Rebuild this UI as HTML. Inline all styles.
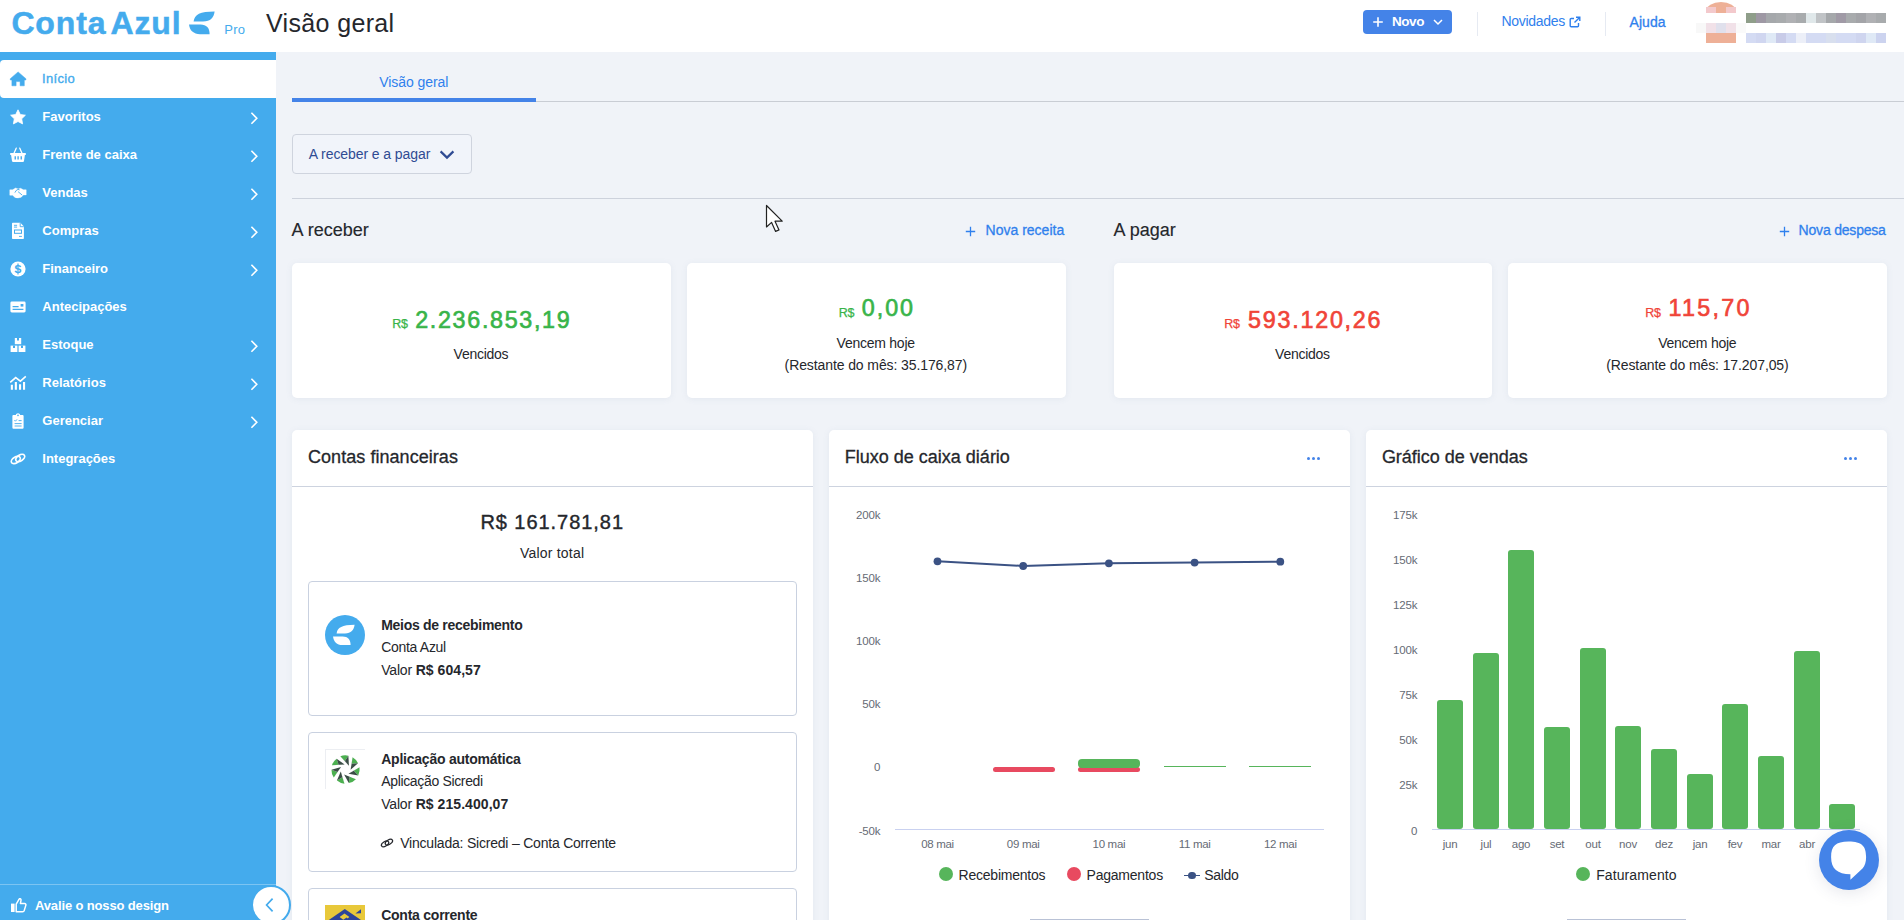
<!DOCTYPE html>
<html><head><meta charset="utf-8"><title>Visão geral</title>
<style>
html,body{margin:0;padding:0;overflow:hidden}
html{width:1904px;height:920px}
body{width:1904px;height:920px;overflow:hidden;position:relative;background:#f0f3f8;font-family:"Liberation Sans",sans-serif}
#app{position:absolute;left:0;top:0;width:1904px;height:920px;overflow:hidden;background:#f0f3f8}
.t{position:absolute;white-space:pre;line-height:1;font-family:"Liberation Sans",sans-serif}
.r{position:absolute;display:block}
b{font-weight:700;letter-spacing:0.06px}
</style></head><body>
<div id="app">
<div class="r" style="left:0px;top:0px;width:1904px;height:52px;background:#fff;"></div>
<div class="r" style="left:0px;top:52px;width:276px;height:868px;background:#44abed;"></div>
<span class="t" style="left:11.40px;top:6.71px;font-size:32px;font-weight:700;color:#44abed;letter-spacing:0.85px;-webkit-text-stroke:0.5px #44abed">Conta</span>
<span class="t" style="left:110.60px;top:6.71px;font-size:32px;font-weight:700;color:#44abed;letter-spacing:0.8px;-webkit-text-stroke:0.5px #44abed">Azul</span>
<svg class="r" style="left:186px;top:8px" width="32" height="30" viewBox="186 8 32 30"><path d="M193.6 21.6 C194.5 14.5 200 11.6 214.6 11.6 C214 17.5 210.5 21.6 203 21.6 Z" fill="#44abed"/><path d="M189 24.6 L200.5 24.6 C206.5 24.6 209.6 28 209.6 34.2 L200 34.2 C193.5 34.2 189.6 30.5 189 24.6 Z" fill="#44abed"/></svg>
<span class="t" style="left:224.30px;top:22.70px;font-size:13px;font-weight:400;color:#44abed;letter-spacing:0.2px;">Pro</span>
<span class="t" style="left:266.00px;top:11.34px;font-size:25px;font-weight:400;color:#25272c;letter-spacing:0.35px;">Visão geral</span>
<div class="r" style="left:1363px;top:10px;width:89px;height:24px;background:#4483e8;border-radius:4px"></div>
<svg class="r" style="left:1372px;top:16px" width="12" height="12" viewBox="0 0 12 12"><path d="M6 1.2V10.8M1.2 6H10.8" stroke="#fff" stroke-width="1.6" fill="none"/></svg>
<span class="t" style="left:1392.00px;top:15.17px;font-size:13.5px;font-weight:700;color:#fff;letter-spacing:-0.45px;">Novo</span>
<svg class="r" style="left:1433px;top:18px" width="10" height="8" viewBox="0 0 10 8"><path d="M1 2L5 6L9 2" stroke="#fff" stroke-width="1.5" fill="none"/></svg>
<div class="r" style="left:1477px;top:12px;width:1px;height:24px;background:#e6eaf2;"></div>
<span class="t" style="left:1501.50px;top:14.15px;font-size:14px;font-weight:400;color:#2f80ed;letter-spacing:-0.3px;">Novidades</span>
<svg class="r" style="left:1569px;top:16px" width="12" height="12" viewBox="0 0 12 12"><path d="M5 2.5H2.2C1.6 2.5 1.2 2.9 1.2 3.5V9.8C1.2 10.4 1.6 10.8 2.2 10.8H8.5C9.1 10.8 9.5 10.4 9.5 9.8V7" stroke="#2f80ed" stroke-width="1.4" fill="none"/><path d="M7 1.2H10.8V5M10.8 1.2L5.5 6.5" stroke="#2f80ed" stroke-width="1.4" fill="none"/></svg>
<div class="r" style="left:1605px;top:12px;width:1px;height:24px;background:#e6eaf2;"></div>
<span class="t" style="left:1629.50px;top:14.65px;font-size:14px;font-weight:400;color:#2f80ed;letter-spacing:0.05px;-webkit-text-stroke:0.3px #2f80ed">Ajuda</span>
<div class="r" style="left:1706px;top:2px;width:30px;height:11px;overflow:hidden"><div style="position:absolute;left:0;top:0;width:30px;height:22px;border-radius:15px 15px 0 0/9px 9px 0 0;background:#eeb097"></div><div style="position:absolute;left:0;top:5px;width:10px;height:6px;background:#f3c9cc"></div><div style="position:absolute;left:20px;top:5px;width:10px;height:6px;background:#f3c9cc"></div></div>
<div class="r" style="left:1696px;top:23px;width:10px;height:10px;background:#f8f8f8;"></div>
<div class="r" style="left:1706px;top:23px;width:10px;height:10px;background:#f1e1e8;"></div>
<div class="r" style="left:1716px;top:23px;width:10px;height:10px;background:#e0e0ec;"></div>
<div class="r" style="left:1726px;top:23px;width:10px;height:10px;background:#f1e1e8;"></div>
<div class="r" style="left:1736px;top:23px;width:10px;height:10px;background:#fafafa;"></div>
<div class="r" style="left:1706px;top:33px;width:30px;height:10px;background:#eeb097;"></div>
<div class="r" style="left:1746px;top:13px;width:10px;height:10px;background:#8f9e8a;"></div>
<div class="r" style="left:1756px;top:13px;width:10px;height:10px;background:#9e98a4;"></div>
<div class="r" style="left:1766px;top:13px;width:10px;height:10px;background:#a5a8ab;"></div>
<div class="r" style="left:1776px;top:13px;width:10px;height:10px;background:#a8abad;"></div>
<div class="r" style="left:1786px;top:13px;width:10px;height:10px;background:#b0b1b4;"></div>
<div class="r" style="left:1796px;top:13px;width:10px;height:10px;background:#a8abad;"></div>
<div class="r" style="left:1806px;top:13px;width:10px;height:10px;background:#e0e8ea;"></div>
<div class="r" style="left:1816px;top:13px;width:10px;height:10px;background:#c0c3c6;"></div>
<div class="r" style="left:1826px;top:13px;width:10px;height:10px;background:#a5a8ab;"></div>
<div class="r" style="left:1836px;top:13px;width:10px;height:10px;background:#a09aa6;"></div>
<div class="r" style="left:1846px;top:13px;width:10px;height:10px;background:#a8abad;"></div>
<div class="r" style="left:1856px;top:13px;width:10px;height:10px;background:#a3a4a8;"></div>
<div class="r" style="left:1866px;top:13px;width:10px;height:10px;background:#b0b1b4;"></div>
<div class="r" style="left:1876px;top:13px;width:10px;height:10px;background:#a8abad;"></div>
<div class="r" style="left:1746px;top:33px;width:10px;height:10px;background:#d4dbf3;"></div>
<div class="r" style="left:1756px;top:33px;width:10px;height:10px;background:#d0d6f0;"></div>
<div class="r" style="left:1766px;top:33px;width:10px;height:10px;background:#dfe9f6;"></div>
<div class="r" style="left:1776px;top:33px;width:10px;height:10px;background:#c8cbe8;"></div>
<div class="r" style="left:1786px;top:33px;width:10px;height:10px;background:#d4dbf3;"></div>
<div class="r" style="left:1796px;top:33px;width:10px;height:10px;background:#eceff8;"></div>
<div class="r" style="left:1806px;top:33px;width:10px;height:10px;background:#d4dbf3;"></div>
<div class="r" style="left:1816px;top:33px;width:10px;height:10px;background:#d4dbf3;"></div>
<div class="r" style="left:1826px;top:33px;width:10px;height:10px;background:#d8dfee;"></div>
<div class="r" style="left:1836px;top:33px;width:10px;height:10px;background:#d4dbf3;"></div>
<div class="r" style="left:1846px;top:33px;width:10px;height:10px;background:#d4dbf3;"></div>
<div class="r" style="left:1856px;top:33px;width:10px;height:10px;background:#cfd5ef;"></div>
<div class="r" style="left:1866px;top:33px;width:10px;height:10px;background:#dfe9f6;"></div>
<div class="r" style="left:1876px;top:33px;width:10px;height:10px;background:#ccd3ef;"></div>
<div class="r" style="left:0px;top:60px;width:276px;height:38px;background:#fff;border-radius:4px 0 0 4px"></div>
<span class="t" style="left:42.00px;top:72.20px;font-size:13px;font-weight:400;color:#44abed;letter-spacing:0.35px;-webkit-text-stroke:0.35px #44abed">Início</span>
<svg class="r" style="left:10px;top:71px;overflow:visible" width="16" height="16" viewBox="0 0 16 16"><path d="M8.1 0.9L0.3 7.7V9H1.9V14.8H6.1V10.6H10.1V14.8H14.3V9H15.9V7.7Z" fill="#44abed" stroke="#44abed" stroke-width="0.5" stroke-linejoin="round"/></svg>
<span class="t" style="left:42.30px;top:110.20px;font-size:13px;font-weight:700;color:#fff;letter-spacing:0px;">Favoritos</span>
<svg class="r" style="left:10px;top:109px;overflow:visible" width="16" height="16" viewBox="0 0 16 16"><path d="M8 0.8L10.3 5.5L15.4 6.2L11.7 9.8L12.6 14.9L8 12.5L3.4 14.9L4.3 9.8L0.6 6.2L5.7 5.5Z" fill="#fff" stroke="#fff" stroke-width="0.8" stroke-linejoin="round"/></svg>
<svg class="r" style="left:249px;top:110.5px" width="10" height="14" viewBox="0 0 10 14"><path d="M2.4 1.8L7.8 7.3L2.4 12.8" stroke="#fff" stroke-width="1.6" fill="none"/></svg>
<span class="t" style="left:42.30px;top:148.20px;font-size:13px;font-weight:700;color:#fff;letter-spacing:0px;">Frente de caixa</span>
<svg class="r" style="left:10px;top:147px;overflow:visible" width="16" height="16" viewBox="0 0 16 16"><path d="M0.2 6.1H15.8V8.1H14.9L14 14C13.9 14.6 13.5 14.9 12.9 14.9H3.1C2.5 14.9 2.1 14.6 2 14L1.1 8.1H0.2Z" fill="#fff"/><path d="M3.9 6.4L6.2 1.2M12.1 6.4L9.8 1.2" stroke="#fff" stroke-width="1.3" stroke-linecap="round"/><path d="M5.25 9.3V12.5M8.1 9.3V12.5M11.25 9.3V12.5" stroke="#44abed" stroke-width="1.4"/></svg>
<svg class="r" style="left:249px;top:148.5px" width="10" height="14" viewBox="0 0 10 14"><path d="M2.4 1.8L7.8 7.3L2.4 12.8" stroke="#fff" stroke-width="1.6" fill="none"/></svg>
<span class="t" style="left:42.30px;top:186.20px;font-size:13px;font-weight:700;color:#fff;letter-spacing:0px;">Vendas</span>
<svg class="r" style="left:10px;top:185px;overflow:visible" width="16" height="16" viewBox="0 0 16 16"><path d="M-0.2 4.8H2.6L5.6 3L8.2 4L10.6 3.3L13.4 4.8H16.2V9.9H13.4L11.2 12.2Q8 13.5 5 12.4L2.6 10.2H-0.2Z" fill="#fff" stroke="#fff" stroke-width="0.4" stroke-linejoin="round"/><path d="M4.9 7.6Q5.8 5 8 4.4L9.6 4.9" stroke="#44abed" stroke-width="0.9" fill="none"/><path d="M8.1 6.7L12.2 10.1" stroke="#44abed" stroke-width="0.9" fill="none"/></svg>
<svg class="r" style="left:249px;top:186.5px" width="10" height="14" viewBox="0 0 10 14"><path d="M2.4 1.8L7.8 7.3L2.4 12.8" stroke="#fff" stroke-width="1.6" fill="none"/></svg>
<span class="t" style="left:42.30px;top:224.20px;font-size:13px;font-weight:700;color:#fff;letter-spacing:0px;">Compras</span>
<svg class="r" style="left:10px;top:223px;overflow:visible" width="16" height="16" viewBox="0 0 16 16"><path d="M2 0.8C2 0.2 2.4 -0.2 3 -0.2H10.4L13.9 3.4V14.9C13.9 15.5 13.5 15.9 12.9 15.9H3C2.4 15.9 2 15.5 2 14.9Z" fill="#fff"/><path d="M10.2 0V3.7H13.8" fill="none" stroke="#44abed" stroke-width="0.9"/><path d="M4 2.3H7.1M4 4.1H7.1M9 13.4H11.9" stroke="#44abed" stroke-width="0.9"/><rect x="4.5" y="7" width="7" height="3.3" fill="none" stroke="#44abed" stroke-width="1"/></svg>
<svg class="r" style="left:249px;top:224.5px" width="10" height="14" viewBox="0 0 10 14"><path d="M2.4 1.8L7.8 7.3L2.4 12.8" stroke="#fff" stroke-width="1.6" fill="none"/></svg>
<span class="t" style="left:42.30px;top:262.20px;font-size:13px;font-weight:700;color:#fff;letter-spacing:0px;">Financeiro</span>
<svg class="r" style="left:10px;top:261px;overflow:visible" width="16" height="16" viewBox="0 0 16 16"><circle cx="8" cy="8" r="7.6" fill="#fff"/><text x="8" y="12" text-anchor="middle" font-family="Liberation Sans" font-weight="700" font-size="11" fill="#44abed">S</text><path d="M8 2.6V13.4" stroke="#44abed" stroke-width="1.2"/></svg>
<svg class="r" style="left:249px;top:262.5px" width="10" height="14" viewBox="0 0 10 14"><path d="M2.4 1.8L7.8 7.3L2.4 12.8" stroke="#fff" stroke-width="1.6" fill="none"/></svg>
<span class="t" style="left:42.30px;top:300.20px;font-size:13px;font-weight:700;color:#fff;letter-spacing:0px;">Antecipações</span>
<svg class="r" style="left:10px;top:299px;overflow:visible" width="16" height="16" viewBox="0 0 16 16"><rect x="0.4" y="2.6" width="15.2" height="10.8" rx="1.4" fill="#fff"/><path d="M2.6 7.6H8.6M2.6 10.4H13.4" stroke="#44abed" stroke-width="1.1"/><rect x="10.6" y="5" width="2.8" height="2.6" fill="#44abed"/></svg>
<span class="t" style="left:42.30px;top:338.20px;font-size:13px;font-weight:700;color:#fff;letter-spacing:0px;">Estoque</span>
<svg class="r" style="left:10px;top:337px;overflow:visible" width="16" height="16" viewBox="0 0 16 16"><path d="M4.8 1H11.2V7.2H4.8Z" fill="#fff"/><path d="M0.6 8.6H7.4V15H0.6Z" fill="#fff"/><path d="M8.6 8.6H15.4V15H8.6Z" fill="#fff"/><path d="M7 1H9V3.6H7ZM3 8.6H5V11H3ZM11 8.6H13V11H11Z" fill="#44abed"/></svg>
<svg class="r" style="left:249px;top:338.5px" width="10" height="14" viewBox="0 0 10 14"><path d="M2.4 1.8L7.8 7.3L2.4 12.8" stroke="#fff" stroke-width="1.6" fill="none"/></svg>
<span class="t" style="left:42.30px;top:376.20px;font-size:13px;font-weight:700;color:#fff;letter-spacing:0px;">Relatórios</span>
<svg class="r" style="left:10px;top:375px;overflow:visible" width="16" height="16" viewBox="0 0 16 16"><path d="M1.85 9.8V14.8M5.85 6.9V14.8M10.05 9.2V14.8M14.05 6.9V14.8" stroke="#fff" stroke-width="2.1"/><path d="M0.2 7.3L5.7 2.6L10.4 6.2L15.8 1.4" stroke="#fff" stroke-width="1.6" fill="none"/></svg>
<svg class="r" style="left:249px;top:376.5px" width="10" height="14" viewBox="0 0 10 14"><path d="M2.4 1.8L7.8 7.3L2.4 12.8" stroke="#fff" stroke-width="1.6" fill="none"/></svg>
<span class="t" style="left:42.30px;top:414.20px;font-size:13px;font-weight:700;color:#fff;letter-spacing:0px;">Gerenciar</span>
<svg class="r" style="left:10px;top:413px;overflow:visible" width="16" height="16" viewBox="0 0 16 16"><path d="M2.4 3C2.4 2.5 2.8 2.1 3.3 2.1H5.8C6 1 6.9 0.3 8 0.3C9.1 0.3 10 1 10.2 2.1H12.7C13.2 2.1 13.6 2.5 13.6 3V14.8C13.6 15.3 13.2 15.7 12.7 15.7H3.3C2.8 15.7 2.4 15.3 2.4 14.8Z" fill="#fff"/><circle cx="8" cy="2.4" r="0.8" fill="#44abed"/><path d="M4.4 7.2L5.4 8.2L7 6.4M8.6 7.6H11.6M4.6 10.6H11.6M4.6 13H11.6" stroke="#44abed" stroke-width="0.9" fill="none"/></svg>
<svg class="r" style="left:249px;top:414.5px" width="10" height="14" viewBox="0 0 10 14"><path d="M2.4 1.8L7.8 7.3L2.4 12.8" stroke="#fff" stroke-width="1.6" fill="none"/></svg>
<span class="t" style="left:42.30px;top:452.20px;font-size:13px;font-weight:700;color:#fff;letter-spacing:0px;">Integrações</span>
<svg class="r" style="left:10px;top:451px;overflow:visible" width="16" height="16" viewBox="0 0 16 16"><g fill="none" stroke="#fff" stroke-width="1.7"><ellipse cx="5.8" cy="9" rx="5" ry="2.9" transform="rotate(-32 5.8 9)"/><ellipse cx="10.2" cy="7" rx="5" ry="2.9" transform="rotate(-32 10.2 7)"/></g></svg>
<div class="r" style="left:0px;top:884px;width:276px;height:1px;background:#7cc4f2;"></div>
<svg class="r" style="left:10px;top:896px" width="18" height="18" viewBox="0 0 18 18"><rect x="1" y="7.6" width="3.6" height="8.4" fill="#fff"/><path d="M6.2 8.2L9 3.4C9.4 2.2 11.4 2.6 11 4.4L10.4 7.4H14.6C15.6 7.4 16.2 8.4 15.8 9.4L14.2 14.6C14 15.4 13.4 15.8 12.6 15.8H6.2Z" fill="none" stroke="#fff" stroke-width="1.5" stroke-linejoin="round"/></svg>
<span class="t" style="left:35.00px;top:898.60px;font-size:13px;font-weight:700;color:#fff;letter-spacing:-0.14px;">Avalie o nosso design</span>
<div class="r" style="left:276px;top:52px;width:1628px;height:868px;background:#f0f3f8;"></div>
<div class="r" style="left:251px;top:885px;width:36px;height:36px;border-radius:50%;background:#fff;border:2px solid #44abed"></div>
<svg class="r" style="left:264px;top:897px" width="12" height="16" viewBox="0 0 12 16"><path d="M8.6 1.6L2.6 8L8.6 14.4" stroke="#44abed" stroke-width="1.7" fill="none"/></svg>
<div class="r" style="left:292px;top:101px;width:1612px;height:1px;background:#c9cdd4;"></div>
<div class="r" style="left:292px;top:98px;width:244px;height:4px;background:#4483e8;"></div>
<span class="t" style="left:379.30px;top:75.45px;font-size:14px;font-weight:400;color:#2f80ed;letter-spacing:-0.08px;">Visão geral</span>
<div class="r" style="left:292px;top:134px;width:178px;height:38px;border:1px solid #cfd4de;border-radius:4px;background:#f1f4fa"></div>
<span class="t" style="left:308.80px;top:147.15px;font-size:14px;font-weight:400;color:#2f4b93;letter-spacing:-0.08px;">A receber e a pagar</span>
<svg class="r" style="left:438px;top:148px" width="18" height="14" viewBox="0 0 18 14"><path d="M2.6 3.4L9 9.6L15.4 3.4" stroke="#2f4b93" stroke-width="2.2" fill="none"/></svg>
<div class="r" style="left:292px;top:198px;width:1612px;height:1px;background:#cdd2dc;"></div>
<span class="t" style="left:291.60px;top:220.96px;font-size:18px;font-weight:400;color:#25272c;letter-spacing:0.02px;-webkit-text-stroke:0.15px #25272c">A receber</span>
<span class="t" style="left:1113.60px;top:220.96px;font-size:18px;font-weight:400;color:#25272c;letter-spacing:0.02px;-webkit-text-stroke:0.15px #25272c">A pagar</span>
<svg class="r" style="left:965px;top:225.5px" width="11" height="11" viewBox="0 0 11 11"><path d="M5.5 0.8V10.2M0.8 5.5H10.2" stroke="#2f80ed" stroke-width="1.3" fill="none"/></svg>
<span class="t" style="left:985.60px;top:223.15px;font-size:14px;font-weight:400;color:#2f80ed;letter-spacing:0px;-webkit-text-stroke:0.3px #2f80ed">Nova receita</span>
<svg class="r" style="left:1779px;top:225.5px" width="11" height="11" viewBox="0 0 11 11"><path d="M5.5 0.8V10.2M0.8 5.5H10.2" stroke="#2f80ed" stroke-width="1.3" fill="none"/></svg>
<span class="t" style="left:1798.60px;top:223.15px;font-size:14px;font-weight:400;color:#2f80ed;letter-spacing:-0.2px;-webkit-text-stroke:0.3px #2f80ed">Nova despesa</span>
<div class="r" style="left:292px;top:263px;width:379px;height:135px;background:#fff;border-radius:5px;box-shadow:0 1px 6px rgba(120,135,170,0.10)"></div>
<div class="r" style="left:687px;top:263px;width:379px;height:135px;background:#fff;border-radius:5px;box-shadow:0 1px 6px rgba(120,135,170,0.10)"></div>
<div class="r" style="left:1114px;top:263px;width:378px;height:135px;background:#fff;border-radius:5px;box-shadow:0 1px 6px rgba(120,135,170,0.10)"></div>
<div class="r" style="left:1508px;top:263px;width:379px;height:135px;background:#fff;border-radius:5px;box-shadow:0 1px 6px rgba(120,135,170,0.10)"></div>
<span class="t" style="left:392.30px;top:317.92px;font-size:12.5px;font-weight:400;color:#38b449;letter-spacing:-0.35px;-webkit-text-stroke:0.25px #38b449">R$</span>
<span class="t" style="left:415.20px;top:308.78px;font-size:23.3px;font-weight:400;color:#38b449;letter-spacing:1.68px;-webkit-text-stroke:0.65px #38b449">2.236.853,19</span>
<span class="t" style="left:453.60px;top:347.15px;font-size:14px;font-weight:400;color:#25272c;letter-spacing:-0.26px;">Vencidos</span>
<span class="t" style="left:838.80px;top:306.52px;font-size:12.5px;font-weight:400;color:#38b449;letter-spacing:-0.35px;-webkit-text-stroke:0.25px #38b449">R$</span>
<span class="t" style="left:861.80px;top:297.38px;font-size:23.3px;font-weight:400;color:#38b449;letter-spacing:1.95px;-webkit-text-stroke:0.65px #38b449">0,00</span>
<span class="t" style="left:836.60px;top:336.15px;font-size:14px;font-weight:400;color:#25272c;letter-spacing:-0.25px;">Vencem hoje</span>
<span class="t" style="left:784.60px;top:358.15px;font-size:14px;font-weight:400;color:#25272c;letter-spacing:-0.1px;">(Restante do mês: 35.176,87)</span>
<span class="t" style="left:1224.30px;top:317.92px;font-size:12.5px;font-weight:400;color:#f04438;letter-spacing:-0.35px;-webkit-text-stroke:0.25px #f04438">R$</span>
<span class="t" style="left:1248.00px;top:308.78px;font-size:23.3px;font-weight:400;color:#f04438;letter-spacing:1.77px;-webkit-text-stroke:0.65px #f04438">593.120,26</span>
<span class="t" style="left:1275.10px;top:347.15px;font-size:14px;font-weight:400;color:#25272c;letter-spacing:-0.26px;">Vencidos</span>
<span class="t" style="left:1645.30px;top:306.52px;font-size:12.5px;font-weight:400;color:#f04438;letter-spacing:-0.35px;-webkit-text-stroke:0.25px #f04438">R$</span>
<span class="t" style="left:1668.60px;top:297.38px;font-size:23.3px;font-weight:400;color:#f04438;letter-spacing:2.25px;-webkit-text-stroke:0.65px #f04438">115,70</span>
<span class="t" style="left:1658.20px;top:336.15px;font-size:14px;font-weight:400;color:#25272c;letter-spacing:-0.25px;">Vencem hoje</span>
<span class="t" style="left:1606.20px;top:358.15px;font-size:14px;font-weight:400;color:#25272c;letter-spacing:-0.1px;">(Restante do mês: 17.207,05)</span>
<svg class="r" style="left:765px;top:204px" width="22" height="30" viewBox="0 0 22 30"><path d="M1.5 1.5V23L6.6 18.4L10.6 27.4L14 25.9L10 17.2H17.2Z" fill="#fff" stroke="#222" stroke-width="1.2" stroke-linejoin="round"/></svg>
<div class="r" style="left:292px;top:430px;width:521px;height:500px;background:#fff;border-radius:5px 5px 0 0;box-shadow:0 1px 6px rgba(120,135,170,0.10)"></div>
<div class="r" style="left:829px;top:430px;width:521px;height:500px;background:#fff;border-radius:5px 5px 0 0;box-shadow:0 1px 6px rgba(120,135,170,0.10)"></div>
<div class="r" style="left:1366px;top:430px;width:521px;height:500px;background:#fff;border-radius:5px 5px 0 0;box-shadow:0 1px 6px rgba(120,135,170,0.10)"></div>
<div class="r" style="left:292px;top:486px;width:521px;height:1px;background:#cdd3df;"></div>
<div class="r" style="left:829px;top:486px;width:521px;height:1px;background:#cdd3df;"></div>
<div class="r" style="left:1366px;top:486px;width:521px;height:1px;background:#cdd3df;"></div>
<span class="t" style="left:308.00px;top:447.76px;font-size:18px;font-weight:400;color:#25272c;letter-spacing:0.05px;-webkit-text-stroke:0.3px #25272c">Contas financeiras</span>
<span class="t" style="left:844.80px;top:447.76px;font-size:18px;font-weight:400;color:#25272c;letter-spacing:0px;-webkit-text-stroke:0.3px #25272c">Fluxo de caixa diário</span>
<span class="t" style="left:1381.90px;top:447.76px;font-size:18px;font-weight:400;color:#25272c;letter-spacing:-0.02px;-webkit-text-stroke:0.3px #25272c">Gráfico de vendas</span>
<div class="r" style="left:1307px;top:456.5px;width:3.4px;height:3.4px;background:#4483e8;border-radius:50%"></div>
<div class="r" style="left:1312px;top:456.5px;width:3.4px;height:3.4px;background:#4483e8;border-radius:50%"></div>
<div class="r" style="left:1317px;top:456.5px;width:3.4px;height:3.4px;background:#4483e8;border-radius:50%"></div>
<div class="r" style="left:1844px;top:456.5px;width:3.4px;height:3.4px;background:#4483e8;border-radius:50%"></div>
<div class="r" style="left:1849px;top:456.5px;width:3.4px;height:3.4px;background:#4483e8;border-radius:50%"></div>
<div class="r" style="left:1854px;top:456.5px;width:3.4px;height:3.4px;background:#4483e8;border-radius:50%"></div>
<span class="t" style="left:480.40px;top:511.77px;font-size:20px;font-weight:400;color:#25272c;letter-spacing:0.95px;-webkit-text-stroke:0.4px #25272c">R$ 161.781,81</span>
<span class="t" style="left:520.00px;top:546.15px;font-size:14px;font-weight:400;color:#25272c;letter-spacing:0.2px;">Valor total</span>
<div class="r" style="left:308px;top:581px;width:489px;height:135px;background:#fff;border:1px solid #c9d1e0;border-radius:4px;background:#fff;box-sizing:border-box"></div>
<div class="r" style="left:308px;top:732px;width:489px;height:140px;background:#fff;border:1px solid #c9d1e0;border-radius:4px;background:#fff;box-sizing:border-box"></div>
<div class="r" style="left:308px;top:888px;width:489px;height:60px;background:#fff;border:1px solid #c9d1e0;border-radius:4px;background:#fff;box-sizing:border-box"></div>
<svg class="r" style="left:325px;top:615px" width="40" height="40" viewBox="0 0 40 40"><circle cx="20" cy="20" r="20" fill="#44abed"/><path d="M11.6 18.4C12.4 12.6 17 9.8 29.6 9.8C29 14.8 26 18.4 20 18.4Z" fill="#fff"/><path d="M8 21.4H17.6C22.8 21.4 25.6 24.4 25.6 30H17.4C11.8 30 8.6 26.6 8 21.4Z" fill="#fff"/></svg>
<span class="t" style="left:381.20px;top:618.45px;font-size:14px;font-weight:700;color:#25272c;letter-spacing:-0.29px;">Meios de recebimento</span>
<span class="t" style="left:381.20px;top:640.45px;font-size:14px;font-weight:400;color:#25272c;letter-spacing:-0.3px;">Conta Azul</span>
<span class="t" style="left:381.20px;top:663.15px;font-size:14px;font-weight:400;color:#25272c;letter-spacing:-0.18px;">Valor <b>R$ 604,57</b></span>
<div class="r" style="left:325px;top:749px;width:40px;height:40px;border-left:1px solid #eceef2;border-top:1px solid #eceef2;box-sizing:border-box"></div>
<svg class="r" style="left:330px;top:754.2px" width="31" height="31" viewBox="-15.5 -15.5 31 31"><g transform="rotate(0.00)"><path d="M-5.2 -13.2 Q-1 -14.8 2.9 -13.7 L-0.6 -8.4 Z" fill="#4cb050"/><path d="M2.9 -13.7 L3.4 -3.8 L-0.6 -8.4 Z" fill="#3a4d45"/><path d="M-5.2 -13.2 L-0.6 -8.4 L3.4 -3.8 Z" fill="#3a4d45"/></g><g transform="rotate(51.43)"><path d="M-5.2 -13.2 Q-1 -14.8 2.9 -13.7 L-0.6 -8.4 Z" fill="#4cb050"/><path d="M2.9 -13.7 L3.4 -3.8 L-0.6 -8.4 Z" fill="#3a4d45"/><path d="M-5.2 -13.2 L-0.6 -8.4 L3.4 -3.8 Z" fill="#3a4d45"/></g><g transform="rotate(102.86)"><path d="M-5.2 -13.2 Q-1 -14.8 2.9 -13.7 L-0.6 -8.4 Z" fill="#4cb050"/><path d="M2.9 -13.7 L3.4 -3.8 L-0.6 -8.4 Z" fill="#3a4d45"/><path d="M-5.2 -13.2 L-0.6 -8.4 L3.4 -3.8 Z" fill="#3a4d45"/></g><g transform="rotate(154.29)"><path d="M-5.2 -13.2 Q-1 -14.8 2.9 -13.7 L-0.6 -8.4 Z" fill="#4cb050"/><path d="M2.9 -13.7 L3.4 -3.8 L-0.6 -8.4 Z" fill="#3a4d45"/><path d="M-5.2 -13.2 L-0.6 -8.4 L3.4 -3.8 Z" fill="#3a4d45"/></g><g transform="rotate(205.71)"><path d="M-5.2 -13.2 Q-1 -14.8 2.9 -13.7 L-0.6 -8.4 Z" fill="#4cb050"/><path d="M2.9 -13.7 L3.4 -3.8 L-0.6 -8.4 Z" fill="#3a4d45"/><path d="M-5.2 -13.2 L-0.6 -8.4 L3.4 -3.8 Z" fill="#3a4d45"/></g><g transform="rotate(257.14)"><path d="M-5.2 -13.2 Q-1 -14.8 2.9 -13.7 L-0.6 -8.4 Z" fill="#4cb050"/><path d="M2.9 -13.7 L3.4 -3.8 L-0.6 -8.4 Z" fill="#3a4d45"/><path d="M-5.2 -13.2 L-0.6 -8.4 L3.4 -3.8 Z" fill="#3a4d45"/></g><g transform="rotate(308.57)"><path d="M-5.2 -13.2 Q-1 -14.8 2.9 -13.7 L-0.6 -8.4 Z" fill="#4cb050"/><path d="M2.9 -13.7 L3.4 -3.8 L-0.6 -8.4 Z" fill="#3a4d45"/><path d="M-5.2 -13.2 L-0.6 -8.4 L3.4 -3.8 Z" fill="#3a4d45"/></g></svg>
<span class="t" style="left:381.20px;top:752.45px;font-size:14px;font-weight:700;color:#25272c;letter-spacing:-0.23px;">Aplicação automática</span>
<span class="t" style="left:381.20px;top:774.45px;font-size:14px;font-weight:400;color:#25272c;letter-spacing:-0.34px;">Aplicação Sicredi</span>
<span class="t" style="left:381.20px;top:797.15px;font-size:14px;font-weight:400;color:#25272c;letter-spacing:-0.18px;">Valor <b>R$ 215.400,07</b></span>
<svg class="r" style="left:380px;top:836px" width="14" height="14" viewBox="0 0 16 16"><g fill="none" stroke="#25272c" stroke-width="1.5"><ellipse cx="5.8" cy="9" rx="4.6" ry="2.6" transform="rotate(-32 5.8 9)"/><ellipse cx="10.2" cy="7" rx="4.6" ry="2.6" transform="rotate(-32 10.2 7)"/></g></svg>
<span class="t" style="left:400.20px;top:836.15px;font-size:14px;font-weight:400;color:#25272c;letter-spacing:-0.21px;">Vinculada: Sicredi – Conta Corrente</span>
<svg class="r" style="left:325px;top:905px" width="40" height="15" viewBox="0 0 40 15"><rect width="40" height="15" fill="#e8c83a"/><path d="M19.8 4L36 15H3.8Z" fill="#2d449a"/><path d="M19.5 8.4L24.4 12L19.5 15.6L14.6 12Z" fill="#e8c83a"/><path d="M18 15L21.5 12.6L24 15Z" fill="#2d449a"/><path d="M36 4.2V8.2L30.4 8.6Z" fill="#2d449a"/></svg>
<span class="t" style="left:381.20px;top:908.45px;font-size:14px;font-weight:700;color:#25272c;letter-spacing:-0.24px;">Conta corrente</span>
<span class="t" style="right:1023.80px;top:509.77px;font-size:11.5px;font-weight:400;color:#666b75;letter-spacing:-0.2px;">200k</span>
<span class="t" style="right:1023.80px;top:572.77px;font-size:11.5px;font-weight:400;color:#666b75;letter-spacing:-0.2px;">150k</span>
<span class="t" style="right:1023.80px;top:635.77px;font-size:11.5px;font-weight:400;color:#666b75;letter-spacing:-0.2px;">100k</span>
<span class="t" style="right:1023.80px;top:698.77px;font-size:11.5px;font-weight:400;color:#666b75;letter-spacing:-0.2px;">50k</span>
<span class="t" style="right:1023.80px;top:761.77px;font-size:11.5px;font-weight:400;color:#666b75;letter-spacing:-0.2px;">0</span>
<span class="t" style="right:1023.80px;top:825.77px;font-size:11.5px;font-weight:400;color:#666b75;letter-spacing:-0.2px;">-50k</span>
<div class="r" style="left:895px;top:829px;width:429px;height:1px;background:#c9d1f0;"></div>
<span class="t" style="left:737.50px;width:400px;text-align:center;top:838.87px;font-size:11.5px;font-weight:400;color:#666b75;letter-spacing:-0.3px;">08 mai</span>
<span class="t" style="left:823.20px;width:400px;text-align:center;top:838.87px;font-size:11.5px;font-weight:400;color:#666b75;letter-spacing:-0.3px;">09 mai</span>
<span class="t" style="left:908.90px;width:400px;text-align:center;top:838.87px;font-size:11.5px;font-weight:400;color:#666b75;letter-spacing:-0.3px;">10 mai</span>
<span class="t" style="left:994.60px;width:400px;text-align:center;top:838.87px;font-size:11.5px;font-weight:400;color:#666b75;letter-spacing:-0.3px;">11 mai</span>
<span class="t" style="left:1080.30px;width:400px;text-align:center;top:838.87px;font-size:11.5px;font-weight:400;color:#666b75;letter-spacing:-0.3px;">12 mai</span>
<svg class="r" style="left:829px;top:486px" width="521" height="434" viewBox="0 0 521 434"><polyline points="108.5,75.3 194.2,80.0 279.9,77.3 365.6,76.6 451.3,75.7" fill="none" stroke="#3b5284" stroke-width="2"/><circle cx="108.5" cy="75.3" r="3.9" fill="#3b5284"/><circle cx="194.2" cy="80.0" r="3.9" fill="#3b5284"/><circle cx="279.9" cy="77.3" r="3.9" fill="#3b5284"/><circle cx="365.6" cy="76.6" r="3.9" fill="#3b5284"/><circle cx="451.3" cy="75.7" r="3.9" fill="#3b5284"/></svg>
<div class="r" style="left:993px;top:767px;width:62px;height:5px;background:#e84a60;border-radius:2.5px"></div>
<div class="r" style="left:1078px;top:767px;width:62px;height:5px;background:#e84a60;border-radius:2.5px"></div>
<div class="r" style="left:1078px;top:759px;width:62px;height:8.5px;background:#57b55b;border-radius:4px"></div>
<div class="r" style="left:1164px;top:765.6px;width:62px;height:1px;background:#57b55b;"></div>
<div class="r" style="left:1249px;top:765.6px;width:62px;height:1px;background:#57b55b;"></div>
<div class="r" style="left:939px;top:867px;width:14px;height:14px;background:#57b55b;border-radius:50%"></div>
<span class="t" style="left:958.60px;top:868.05px;font-size:14px;font-weight:400;color:#25272c;letter-spacing:-0.23px;">Recebimentos</span>
<div class="r" style="left:1067px;top:867px;width:14px;height:14px;background:#e84a60;border-radius:50%"></div>
<span class="t" style="left:1086.60px;top:868.05px;font-size:14px;font-weight:400;color:#25272c;letter-spacing:-0.23px;">Pagamentos</span>
<div class="r" style="left:1184px;top:874.7px;width:16px;height:1.8px;background:#3b5284;"></div>
<div class="r" style="left:1188.4px;top:872px;width:7.2px;height:7.2px;background:#3b5284;border-radius:50%"></div>
<span class="t" style="left:1204.20px;top:868.05px;font-size:14px;font-weight:400;color:#25272c;letter-spacing:-0.33px;">Saldo</span>
<div class="r" style="left:1030px;top:918.5px;width:119px;height:1.5px;background:#b9c2d6;"></div>
<span class="t" style="right:486.80px;top:509.77px;font-size:11.5px;font-weight:400;color:#666b75;letter-spacing:-0.2px;">175k</span>
<span class="t" style="right:486.80px;top:554.77px;font-size:11.5px;font-weight:400;color:#666b75;letter-spacing:-0.2px;">150k</span>
<span class="t" style="right:486.80px;top:599.77px;font-size:11.5px;font-weight:400;color:#666b75;letter-spacing:-0.2px;">125k</span>
<span class="t" style="right:486.80px;top:644.77px;font-size:11.5px;font-weight:400;color:#666b75;letter-spacing:-0.2px;">100k</span>
<span class="t" style="right:486.80px;top:689.77px;font-size:11.5px;font-weight:400;color:#666b75;letter-spacing:-0.2px;">75k</span>
<span class="t" style="right:486.80px;top:734.77px;font-size:11.5px;font-weight:400;color:#666b75;letter-spacing:-0.2px;">50k</span>
<span class="t" style="right:486.80px;top:779.77px;font-size:11.5px;font-weight:400;color:#666b75;letter-spacing:-0.2px;">25k</span>
<span class="t" style="right:486.80px;top:825.77px;font-size:11.5px;font-weight:400;color:#666b75;letter-spacing:-0.2px;">0</span>
<div class="r" style="left:1432px;top:829px;width:428px;height:1px;background:#c9d1f0;"></div>
<div class="r" style="left:1437px;top:700px;width:26px;height:129px;background:#57b55b;border-radius:3px"></div>
<span class="t" style="left:1250.00px;width:400px;text-align:center;top:838.87px;font-size:11.5px;font-weight:400;color:#666b75;letter-spacing:-0.2px;">jun</span>
<div class="r" style="left:1473px;top:653px;width:26px;height:176px;background:#57b55b;border-radius:3px"></div>
<span class="t" style="left:1286.00px;width:400px;text-align:center;top:838.87px;font-size:11.5px;font-weight:400;color:#666b75;letter-spacing:-0.2px;">jul</span>
<div class="r" style="left:1508px;top:550px;width:26px;height:279px;background:#57b55b;border-radius:3px"></div>
<span class="t" style="left:1321.00px;width:400px;text-align:center;top:838.87px;font-size:11.5px;font-weight:400;color:#666b75;letter-spacing:-0.2px;">ago</span>
<div class="r" style="left:1544px;top:727px;width:26px;height:102px;background:#57b55b;border-radius:3px"></div>
<span class="t" style="left:1357.00px;width:400px;text-align:center;top:838.87px;font-size:11.5px;font-weight:400;color:#666b75;letter-spacing:-0.2px;">set</span>
<div class="r" style="left:1580px;top:648px;width:26px;height:181px;background:#57b55b;border-radius:3px"></div>
<span class="t" style="left:1393.00px;width:400px;text-align:center;top:838.87px;font-size:11.5px;font-weight:400;color:#666b75;letter-spacing:-0.2px;">out</span>
<div class="r" style="left:1615px;top:726px;width:26px;height:103px;background:#57b55b;border-radius:3px"></div>
<span class="t" style="left:1428.00px;width:400px;text-align:center;top:838.87px;font-size:11.5px;font-weight:400;color:#666b75;letter-spacing:-0.2px;">nov</span>
<div class="r" style="left:1651px;top:749px;width:26px;height:80px;background:#57b55b;border-radius:3px"></div>
<span class="t" style="left:1464.00px;width:400px;text-align:center;top:838.87px;font-size:11.5px;font-weight:400;color:#666b75;letter-spacing:-0.2px;">dez</span>
<div class="r" style="left:1687px;top:774px;width:26px;height:55px;background:#57b55b;border-radius:3px"></div>
<span class="t" style="left:1500.00px;width:400px;text-align:center;top:838.87px;font-size:11.5px;font-weight:400;color:#666b75;letter-spacing:-0.2px;">jan</span>
<div class="r" style="left:1722px;top:704px;width:26px;height:125px;background:#57b55b;border-radius:3px"></div>
<span class="t" style="left:1535.00px;width:400px;text-align:center;top:838.87px;font-size:11.5px;font-weight:400;color:#666b75;letter-spacing:-0.2px;">fev</span>
<div class="r" style="left:1758px;top:756px;width:26px;height:73px;background:#57b55b;border-radius:3px"></div>
<span class="t" style="left:1571.00px;width:400px;text-align:center;top:838.87px;font-size:11.5px;font-weight:400;color:#666b75;letter-spacing:-0.2px;">mar</span>
<div class="r" style="left:1794px;top:651px;width:26px;height:178px;background:#57b55b;border-radius:3px"></div>
<span class="t" style="left:1607.00px;width:400px;text-align:center;top:838.87px;font-size:11.5px;font-weight:400;color:#666b75;letter-spacing:-0.2px;">abr</span>
<div class="r" style="left:1829px;top:804px;width:26px;height:25px;background:#57b55b;border-radius:3px"></div>
<span class="t" style="left:1642.00px;width:400px;text-align:center;top:838.87px;font-size:11.5px;font-weight:400;color:#666b75;letter-spacing:-0.2px;">mai</span>
<div class="r" style="left:1576px;top:867px;width:14px;height:14px;background:#57b55b;border-radius:50%"></div>
<span class="t" style="left:1596.20px;top:868.05px;font-size:14px;font-weight:400;color:#25272c;letter-spacing:0.1px;">Faturamento</span>
<div class="r" style="left:1567px;top:918.5px;width:119px;height:1.5px;background:#b9c2d6;"></div>
<div class="r" style="left:1819px;top:830px;width:60px;height:60px;border-radius:50%;background:#4483e8;box-shadow:0 3px 16px rgba(60,70,110,0.13)"></div>
<svg class="r" style="left:1830px;top:841px" width="38" height="40" viewBox="0 0 38 40"><path d="M18.6 0.4C32 0.4 36.1 5 36.1 16C36.1 21 35 24.5 32.5 27.5L20.4 38.8V33.3C7.5 33 1.1 28 1.1 16C1.1 5 5.5 0.4 18.6 0.4Z" fill="#fff"/></svg>
</div>
</body></html>
